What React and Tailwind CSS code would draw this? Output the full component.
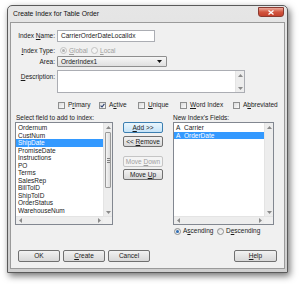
import React from 'react'

const LEFT_FIELDS = [
  'Ordernum', 'CustNum', 'ShipDate', 'PromiseDate', 'Instructions', 'PO',
  'Terms', 'SalesRep', 'BillToID', 'ShipToID', 'OrderStatus', 'WarehouseNum',
]

function Arrow({ dir }) {
  const pts = {
    up: '0,3 2.5,0 5,3',
    down: '0,0 2.5,3 5,0',
    left: '3,0 0,2.5 3,5',
    right: '0,0 3,2.5 0,5',
  }[dir]
  const v = dir === 'up' || dir === 'down'
  return (
    <svg width={v ? 5 : 3} height={v ? 3 : 5} viewBox={v ? '0 0 5 3' : '0 0 3 5'}>
      <polygon points={pts} fill="#8a8a8a" />
    </svg>
  )
}

function VScroll({ thumb }) {
  return (
    <div className="w-[9px] h-full flex flex-col bg-[#ededed] border-l border-[#e4e4e4]">
      <div className="h-[8px] flex items-center justify-center"><Arrow dir="up" /></div>
      <div className="flex-1 flex flex-col">
        {thumb && (
          <div className="mt-[1px] h-[56px] mx-[1px] rounded-[1px] border border-[#9a9a9a] bg-gradient-to-r from-[#f4f4f4] to-[#dcdcdc] flex flex-col items-center justify-center gap-[1px]">
            <div className="w-[3px] h-px bg-[#808080]" />
            <div className="w-[3px] h-px bg-[#808080]" />
            <div className="w-[3px] h-px bg-[#808080]" />
          </div>
        )}
      </div>
      <div className="h-[8px] flex items-center justify-center"><Arrow dir="down" /></div>
    </div>
  )
}

function HScroll() {
  return (
    <div className="h-[8px] flex bg-[#ededed] border-t border-[#e4e4e4]">
      <div className="w-[8px] flex items-center justify-center"><Arrow dir="left" /></div>
      <div className="flex-1" />
      <div className="w-[8px] flex items-center justify-center"><Arrow dir="right" /></div>
      <div className="w-[9px] bg-[#f0f0f0]" />
    </div>
  )
}

function Check({ checked }) {
  return (
    <span className="w-[7px] h-[7px] border border-[#8e8f8f] bg-gradient-to-br from-[#dcdcdc] to-[#fbfbfb] flex items-center justify-center shrink-0">
      {checked && (
        <svg width="5" height="5" viewBox="0 0 5 5">
          <polyline points="0.6,2.6 2,4 4.4,0.8" fill="none" stroke="#2a3f6e" strokeWidth="1.1" />
        </svg>
      )}
    </span>
  )
}

function Radio({ checked, disabled }) {
  return (
    <span className={`w-[7px] h-[7px] rounded-full border flex items-center justify-center shrink-0 ${disabled ? 'border-[#c2c2c2] bg-[#f4f4f4]' : 'border-[#8e8f8f] bg-gradient-to-br from-[#dedede] to-[#fbfbfb]'}`}>
      {checked && (
        <span className={`w-[3px] h-[3px] rounded-full ${disabled ? 'bg-[#b0b0b0]' : 'bg-[#2e6db4]'}`} />
      )}
    </span>
  )
}

function Btn({ children, w = 'w-[40px]', h = 'h-[11px]', focused, disabled }) {
  return (
    <div
      className={`${w} ${h} rounded-[2px] border flex items-center justify-center ${
        focused
          ? 'border-[#3c7fb1] bg-gradient-to-b from-[#eaf6fd] to-[#c6e3f7]'
          : disabled
            ? 'border-[#c5c5c5] bg-[#f4f4f4] text-[#a0a0a0]'
            : 'border-[#707070] bg-gradient-to-b from-[#f2f2f2] to-[#d8d8d8]'
      }`}
    >
      {children}
    </div>
  )
}

export default function App() {
  return (
    <div className="w-[300px] h-[284px] bg-white pt-[5px] pl-[7px] font-['Liberation_Sans',Arial,sans-serif] text-[6.5px] leading-[7.5px] text-[#1a1a1a]">
      {/* Window frame */}
      <div className="relative w-[281px] h-[268px] flex flex-col rounded-t-[5px] border border-[#5a5a5a] bg-gradient-to-b from-[#e6e6e6] to-[#cfcfcf] px-[2px] pb-[3px] shadow-[2px_3px_7px_rgba(0,0,0,0.55)]">
        <div className="h-[16px] flex items-center pl-[3px] text-[6.8px] text-[#111]">Create Index for Table Order</div>
        <div className="absolute top-[1px] right-[3px] w-[26px] h-[10px] rounded-b-[3px] border border-[#8a3a30] bg-gradient-to-b from-[#e9a99c] via-[#d2553f] to-[#c4412c] flex items-center justify-center">
          <svg width="6" height="5" viewBox="0 0 6 5">
            <path d="M0.5 0.5 L5.5 4.5 M5.5 0.5 L0.5 4.5" stroke="#fff" strokeWidth="1.3" />
          </svg>
        </div>

        {/* Client */}
        <div className="w-[275px] h-[247px] flex flex-col border border-[#9a9a9a] bg-[#f0f0f0] pt-[7px]">
          <div className="flex items-center h-[12px]">
            <span className="w-[46px] pr-[2px] text-right">Index <u>N</u>ame:</span>
            <div className="w-[98px] h-[12px] border border-[#abadb3] bg-white flex items-center pl-[3px]">CarrierOrderDateLocalIdx</div>
          </div>
          <div className="flex items-center h-[11px] mt-[3px]">
            <span className="w-[46px] pr-[2px] text-right"><u>I</u>ndex Type:</span>
            <span className="ml-[3px] flex items-center gap-[2px] text-[#a0a0a0] w-[31px]"><Radio checked disabled /><span><u>G</u>lobal</span></span>
            <span className="flex items-center gap-[2px] text-[#a0a0a0]"><Radio disabled /><span><u>L</u>ocal</span></span>
          </div>
          <div className="flex items-center h-[11px]">
            <span className="w-[46px] pr-[2px] text-right">Area:</span>
            <div className="w-[110px] h-[11px] border border-[#8f8f8f] rounded-[1px] bg-gradient-to-b from-[#f6f6f6] to-[#e0e0e0] flex items-center pl-[3px] pr-[4px]">
              <span className="flex-1">OrderIndex1</span>
              <svg width="5" height="3" viewBox="0 0 5 3"><polygon points="0,0 5,0 2.5,3" fill="#111" /></svg>
            </div>
          </div>
          <div className="flex mt-[3px] h-[23px]">
            <span className="w-[46px] pr-[2px] text-right pt-[3px]"><u>D</u>escription:</span>
            <div className="w-[188px] h-full border border-[#abadb3] bg-white flex">
              <div className="flex-1" />
              <VScroll />
            </div>
          </div>
          <div className="flex items-center h-[8px] mt-[8px] pl-[47px]">
            <span className="w-[41px] flex items-center gap-[3px]"><Check /><span>P<u>r</u>imary</span></span>
            <span className="w-[39px] flex items-center gap-[3px]"><Check checked /><span>A<u>c</u>tive</span></span>
            <span className="w-[42px] flex items-center gap-[3px]"><Check /><span><u>U</u>nique</span></span>
            <span className="w-[53px] flex items-center gap-[3px]"><Check /><span><u>W</u>ord Index</span></span>
            <span className="flex items-center gap-[3px]"><Check /><span>A<u>b</u>breviated</span></span>
          </div>

          {/* Lists */}
          <div className="flex mt-[5px] pl-[4px] gap-[10px]">
            <div className="w-[98px] flex flex-col">
              <div className="h-[8px] pl-[1px]">Select field to add to index:</div>
              <div className="h-[103px] border border-[#828790] bg-white flex flex-col">
                <div className="flex-1 flex min-h-0">
                  <div className="flex-1 pt-[1px]">
                    {LEFT_FIELDS.map((f) => (
                      <div key={f} className={`h-[7.5px] pl-[2px] ${f === 'ShipDate' ? 'bg-[#3399ff] text-white' : ''}`}>{f}</div>
                    ))}
                  </div>
                  <VScroll thumb />
                </div>
                <HScroll />
              </div>
            </div>

            <div className="w-[40px] flex flex-col pt-[8px]">
              <Btn focused><span><u>A</u>dd &gt;&gt;</span></Btn>
              <div className="mt-[3px]"><Btn><span>&lt;&lt; <u>R</u>emove</span></Btn></div>
              <div className="mt-[9px]"><Btn disabled><span>Move <u>D</u>own</span></Btn></div>
              <div className="mt-[2px]"><Btn><span>Move <u>U</u>p</span></Btn></div>
            </div>

            <div className="w-[101px] flex flex-col">
              <div className="h-[8px]">New Index's Fields:</div>
              <div className="h-[103px] border border-[#828790] bg-white flex flex-col">
                <div className="flex-1 flex min-h-0">
                  <div className="flex-1 pt-[1px]">
                    <div className="h-[7.5px] flex"><span className="w-[10px] pl-[2px]">A</span><span>Carrier</span></div>
                    <div className="h-[7.5px] flex bg-[#3399ff] text-white"><span className="w-[10px] pl-[2px]">A</span><span>OrderDate</span></div>
                  </div>
                  <VScroll />
                </div>
                <HScroll />
              </div>
              <div className="flex items-center h-[8px] mt-[2px] pl-[1px]">
                <span className="w-[43px] flex items-center gap-[2px]"><Radio checked /><span>A<u>s</u>cending</span></span>
                <span className="flex items-center gap-[2px]"><Radio /><span>D<u>e</u>scending</span></span>
              </div>
            </div>
          </div>

          {/* Bottom buttons */}
          <div className="mt-auto pb-[6px] pl-[7px] pr-[7px] flex items-center">
            <div className="flex gap-[3px]">
              <Btn w="w-[42px]" h="h-[12px]">OK</Btn>
              <Btn w="w-[42px]" h="h-[12px]"><span><u>C</u>reate</span></Btn>
              <Btn w="w-[42px]" h="h-[12px]">Cancel</Btn>
            </div>
            <div className="ml-auto">
              <Btn w="w-[43px]" h="h-[12px]"><span><u>H</u>elp</span></Btn>
            </div>
          </div>
        </div>
      </div>
    </div>
  )
}
